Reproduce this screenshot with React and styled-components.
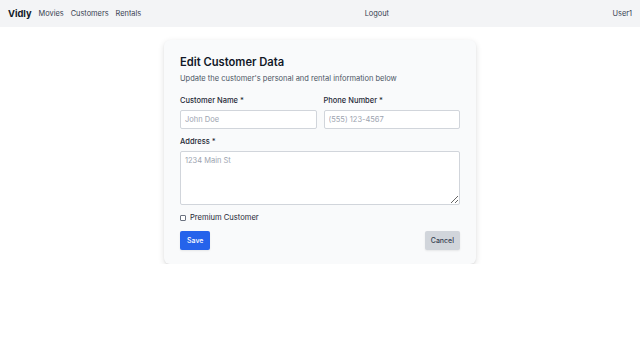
import React from "react";
import styled, { createGlobalStyle } from "styled-components";

const Global = createGlobalStyle`
  html, body { margin: 0; padding: 0; background: #ffffff; }
  body { font-family: Inter, "Noto Sans", sans-serif; color: #111827; }
  * { box-sizing: border-box; }
`;

const Nav = styled.nav`
  height: 27px;
  background: #f3f4f6;
  display: flex;
  align-items: center;
  justify-content: space-between;
  padding: 0 8px;
`;

const NavGroup = styled.div`
  display: flex;
  align-items: center;
  gap: 7px;
`;

const Brand = styled.span`
  font-weight: 700;
  font-size: 9.3px;
  color: #111827;
`;

const NavLink = styled.span`
  font-size: 7.4px;
  color: #374151;
`;

const Main = styled.main`
  display: flex;
  justify-content: center;
  padding-top: 13px;
`;

const Card = styled.section`
  width: 312px;
  background: #f9fafb;
  border-radius: 6px;
  box-shadow: 0 2px 6px rgba(0, 0, 0, 0.12), 0 1px 2px rgba(0, 0, 0, 0.06);
  padding: 14px 16px 14px;
`;

const Title = styled.h1`
  margin: 0;
  font-size: 11.2px;
  font-weight: 600;
  color: #111827;
  line-height: 16px;
`;

const Subtitle = styled.p`
  margin: 3px 0 0;
  font-size: 7.5px;
  color: #4b5563;
  line-height: 12px;
`;

const Row = styled.div`
  display: grid;
  grid-template-columns: 1fr 1fr;
  gap: 7px;
  margin-top: 10px;
`;

const Field = styled.div`
  display: flex;
  flex-direction: column;
  margin-top: ${(p) => p.$mt || 0}px;
`;

const Label = styled.label`
  font-size: 7.5px;
  font-weight: 500;
  color: #1f2937;
  line-height: 12px;
  margin-bottom: 3px;
`;

const Input = styled.input`
  height: 19px;
  border: 1px solid #d1d5db;
  border-radius: 2px;
  background: #ffffff;
  padding: 0 4px;
  font-family: inherit;
  font-size: 7.5px;
  color: #111827;
  outline: none;
  &::placeholder { color: #9ca3af; }
`;

const TextArea = styled.textarea`
  height: 54px;
  border: 1px solid #d1d5db;
  border-radius: 2px;
  background: #ffffff;
  padding: 4px 4px;
  font-family: inherit;
  font-size: 7.5px;
  color: #111827;
  outline: none;
  resize: vertical;
  &::placeholder { color: #9ca3af; }
`;

const CheckRow = styled.label`
  display: flex;
  align-items: center;
  gap: 4px;
  margin-top: 7px;
  font-size: 7.6px;
  color: #1f2937;
  line-height: 12px;
`;

const Check = styled.input`
  appearance: none;
  width: 6px;
  height: 6px;
  margin: 0;
  border: 1px solid #6b7280;
  border-radius: 1px;
  background: #ffffff;
`;

const Actions = styled.div`
  display: flex;
  justify-content: space-between;
  align-items: center;
  margin-top: 7px;
`;

const Button = styled.button`
  height: 19px;
  padding: 0 ${(p) => (p.$variant === "primary" ? 7 : 6)}px;
  border: none;
  border-radius: 2px;
  font-family: inherit;
  font-size: 7px;
  font-weight: 500;
  background: ${(p) => (p.$variant === "primary" ? "#2563eb" : "#d1d5db")};
  color: ${(p) => (p.$variant === "primary" ? "#ffffff" : "#374151")};
  box-shadow: 0 1px 2px rgba(0, 0, 0, 0.08);
`;

export default function App() {
  return (
    <>
      <Global />
      <Nav>
        <NavGroup>
          <Brand>Vidly</Brand>
          <NavLink>Movies</NavLink>
          <NavLink>Customers</NavLink>
          <NavLink>Rentals</NavLink>
        </NavGroup>
        <NavLink>Logout</NavLink>
        <NavLink>User1</NavLink>
      </Nav>
      <Main>
        <Card>
          <Title>Edit Customer Data</Title>
          <Subtitle>Update the customer's personal and rental information below</Subtitle>
          <Row>
            <Field>
              <Label>Customer Name *</Label>
              <Input placeholder="John Doe" />
            </Field>
            <Field>
              <Label>Phone Number *</Label>
              <Input placeholder="(555) 123-4567" />
            </Field>
          </Row>
          <Field $mt={7}>
            <Label>Address *</Label>
            <TextArea placeholder="1234 Main St" />
          </Field>
          <CheckRow>
            <Check type="checkbox" />
            Premium Customer
          </CheckRow>
          <Actions>
            <Button $variant="primary">Save</Button>
            <Button>Cancel</Button>
          </Actions>
        </Card>
      </Main>
    </>
  );
}
